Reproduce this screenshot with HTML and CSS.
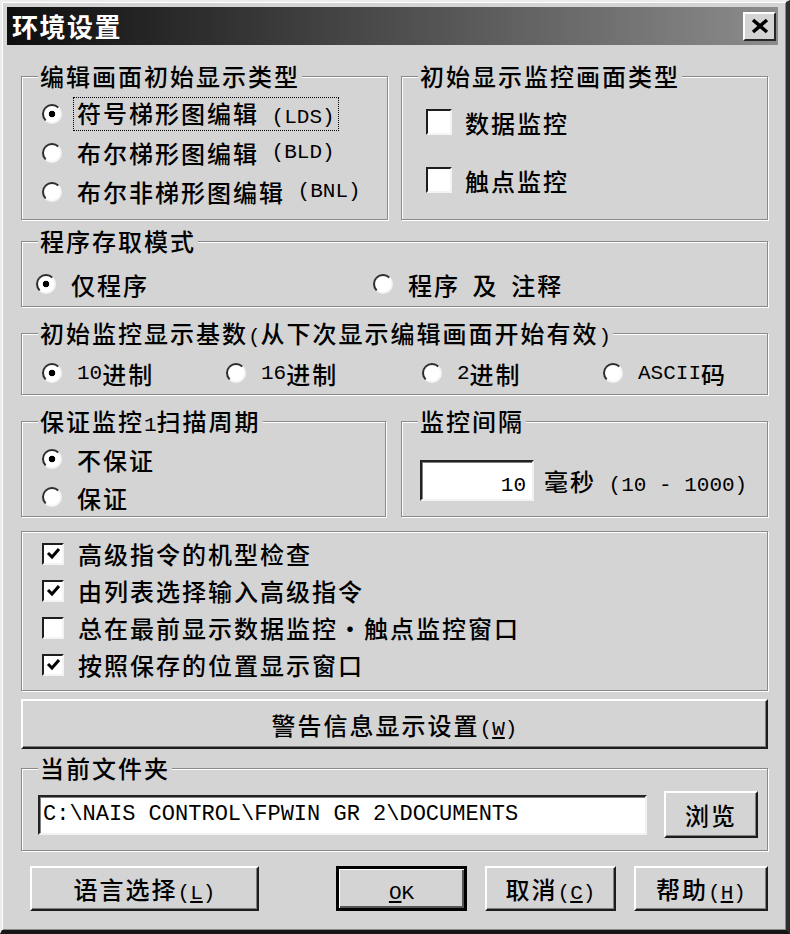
FILE: index.html
```html
<!DOCTYPE html>
<html lang="zh-CN">
	<head>
		<meta charset="UTF-8" />
		<meta name="viewport" content="width=device-width, initial-scale=1.0" />
		<title>环境设置</title>
		<link rel="stylesheet" href="styles.css">
	</head>
	<body>
		<div class="window">
			<div class="titlebar">
				<span class="title">环境设置</span>
				<button class="close-btn" aria-label="关闭">
					<svg width="18" height="16" viewBox="0 0 18 16"><path d="M2 2L16 14M16 2L2 14" stroke="#000" stroke-width="3.5" fill="none"/></svg>
				</button>
			</div>

			<div class="content">
				<div class="row-two">
					<fieldset class="group">
						<legend>编辑画面初始显示类型</legend>
						<div class="edit-type">
							<label class="opt"><span class="radio on"></span><span class="focus">符号梯形图编辑<span class="en"> (LDS)</span></span></label>
							<label class="opt"><span class="radio"></span>布尔梯形图编辑<span class="en"> (BLD)</span></label>
							<label class="opt"><span class="radio"></span>布尔非梯形图编辑<span class="en"> (BNL)</span></label>
						</div>
					</fieldset>
					<fieldset class="group">
						<legend>初始显示监控画面类型</legend>
						<div class="monitor-type">
							<label class="opt"><span class="check big"></span>数据监控</label>
							<label class="opt"><span class="check big"></span>触点监控</label>
						</div>
					</fieldset>
				</div>

				<fieldset class="group access">
					<legend>程序存取模式</legend>
					<div class="inline-opts">
						<label class="opt first"><span class="radio on"></span>仅程序</label>
						<label class="opt"><span class="radio"></span>程序<span class="en"> </span>及<span class="en"> </span>注释</label>
					</div>
				</fieldset>

				<fieldset class="group base">
					<legend>初始监控显示基数<span class="en">(</span>从下次显示编辑画面开始有效<span class="en">)</span></legend>
					<div class="base-opts">
						<label class="opt w184"><span class="radio on"></span><span class="en">10</span>进制</label>
						<label class="opt w196"><span class="radio"></span><span class="en">16</span>进制</label>
						<label class="opt w181"><span class="radio"></span><span class="en">2</span>进制</label>
						<label class="opt"><span class="radio"></span><span class="en">ASCII</span>码</label>
					</div>
				</fieldset>

				<div class="row-two row-scan">
					<fieldset class="group">
						<legend>保证监控<span class="en">1</span>扫描周期</legend>
						<div class="scan-opts">
							<label class="opt"><span class="radio on"></span>不保证</label>
							<label class="opt"><span class="radio"></span>保证</label>
						</div>
					</fieldset>
					<fieldset class="group">
						<legend>监控间隔</legend>
						<div class="interval">
							<div class="edit num"><span class="en">10</span></div>
							<span class="unit">毫秒<span class="en"> (10 - 1000)</span></span>
						</div>
					</fieldset>
				</div>

				<div class="group options">
					<label class="opt"><span class="check"><svg width="15" height="13" viewBox="0 0 15 13"><path d="M2 6L6 10L13 2" stroke="#000" stroke-width="3" fill="none"/></svg></span>高级指令的机型检查</label>
					<label class="opt"><span class="check"><svg width="15" height="13" viewBox="0 0 15 13"><path d="M2 6L6 10L13 2" stroke="#000" stroke-width="3" fill="none"/></svg></span>由列表选择输入高级指令</label>
					<label class="opt"><span class="check"></span>总在最前显示数据监控・触点监控窗口</label>
					<label class="opt"><span class="check"><svg width="15" height="13" viewBox="0 0 15 13"><path d="M2 6L6 10L13 2" stroke="#000" stroke-width="3" fill="none"/></svg></span>按照保存的位置显示窗口</label>
				</div>

				<button class="btn btn-wide">警告信息显示设置<span class="en">(<u>W</u>)</span></button>

				<fieldset class="group folder">
					<legend>当前文件夹</legend>
					<div class="folder-row">
						<div class="edit path">C:\NAIS CONTROL\FPWIN GR 2\DOCUMENTS</div>
						<button class="btn btn-browse">浏览</button>
					</div>
				</fieldset>

				<div class="actions">
					<button class="btn btn-lang">语言选择<span class="en">(<u>L</u>)</span></button>
					<button class="btn btn-ok"><span class="en"><u>O</u>K</span></button>
					<button class="btn btn-small">取消<span class="en">(<u>C</u>)</span></button>
					<button class="btn btn-help">帮助<span class="en">(<u>H</u>)</span></button>
				</div>
			</div>
		</div>
	</body>
</html>
```

FILE: styles.css
```css
* {
	box-sizing: border-box;
}
body {
	margin: 0;
	background: #d4d4d4;
	font-family: 'Noto Sans CJK SC', 'Noto Sans', sans-serif;
	font-size: 24px;
	font-weight: 500;
	letter-spacing: 2px;
	color: #000;
}
.en {
	font-family: 'Liberation Mono', monospace;
	font-size: 21px;
	font-weight: 400;
	letter-spacing: 0;
	line-height: 1;
	white-space: pre;
}
.window {
	width: 790px;
	height: 934px;
	border-style: solid;
	border-width: 2px 4px 4px 2px;
	border-color: #ececec #2e2e2e #161616 #ececec;
	padding: 5px 8px 0 5px;
	box-shadow: inset 1px 1px 0 #fff, inset -1px -1px 0 #8a8a8a;
}
.titlebar {
	height: 38px;
	display: flex;
	align-items: center;
	justify-content: space-between;
	padding: 0 2px 0 5px;
	background: linear-gradient(to right, #0e0e0e, #8c8c8c);
}
.title {
	color: #fff;
	font-weight: 700;
	font-size: 26px;
	letter-spacing: 1.5px;
	line-height: 38px;
}
.close-btn {
	width: 33px;
	height: 29px;
	padding: 0;
	background: #d4d4d4;
	border: 2px solid;
	border-color: #fff #262626 #262626 #fff;
	display: flex;
	align-items: center;
	justify-content: center;
}
.content {
	padding: 18px 10px 0 14px;
}

/* group boxes */
.group {
	margin: 0;
	padding: 0;
	min-width: 0;
	border: 1px solid #8a8a8a;
	box-shadow: 1px 1px 0 #fff, inset 1px 1px 0 #fff;
}
.group legend {
	height: 26px;
	margin-left: 16px;
	padding: 0 2px;
	line-height: 26px;
	background: #d4d4d4;
	white-space: nowrap;
}
.row-two {
	display: grid;
	grid-template-columns: 367px 367px;
	column-gap: 13px;
}
.row-scan {
	grid-template-columns: 365px 367px;
	column-gap: 15px;
	margin-top: 13px;
}
.opt {
	display: flex;
	align-items: center;
	height: 39px;
	white-space: nowrap;
}

/* controls */
.radio {
	flex: none;
	width: 20px;
	height: 20px;
	margin-right: 15px;
	border-radius: 50%;
	border: 2px solid;
	border-color: #2c2c2c #f4f4f4 #f4f4f4 #2c2c2c;
	background: #fff;
}
.radio.on {
	background: radial-gradient(circle, #000 3px, #fff 3.6px);
}
.check {
	flex: none;
	width: 22px;
	height: 22px;
	margin-right: 14px;
	border: 2px solid;
	border-color: #1e1e1e #f4f4f4 #f4f4f4 #1e1e1e;
	background: #fff;
	display: flex;
	align-items: center;
	justify-content: center;
}
.check.big {
	width: 26px;
	height: 26px;
	margin-right: 13px;
}
.focus {
	margin-left: -4px;
	padding: 2px 3px;
	border: 1px dotted #000;
	line-height: 26px;
}
.edit {
	background: #fff;
	border: 2px solid;
	border-color: #222 #f2f2f2 #f2f2f2 #222;
	box-shadow: inset 1px 1px 0 #808080;
}
.btn {
	background: #d4d4d4;
	border: 2px solid;
	border-color: #fff #1c1c1c #1c1c1c #fff;
	box-shadow: inset -1px -1px 0 #808080;
	font: inherit;
	letter-spacing: inherit;
	color: #000;
	padding: 0;
	cursor: pointer;
}

/* individual groups */
.edit-type {
	padding: 5px 0 8px 20px;
}
.monitor-type {
	padding: 13px 0 0 24px;
	display: flex;
	flex-direction: column;
	gap: 18px;
}
.monitor-type .opt {
	height: 40px;
}
.access {
	margin-top: 8px;
}
.inline-opts {
	display: flex;
	padding: 12px 0 4px 14px;
}
.inline-opts .opt {
	height: 36px;
}
.inline-opts .first {
	width: 337px;
}
.base {
	margin-top: 13px;
}
.base-opts {
	display: flex;
	padding: 9px 0 3px 20px;
}
.base-opts .opt {
	height: 36px;
}
.w184 { width: 184px; }
.w196 { width: 196px; }
.w181 { width: 181px; }
.scan-opts {
	padding: 6px 0 0 20px;
}
.scan-opts .opt {
	height: 38px;
}
.interval {
	display: flex;
	align-items: center;
	padding: 26px 0 0 18px;
}
.num {
	width: 114px;
	height: 41px;
	padding-right: 6px;
	text-align: right;
	line-height: 37px;
}
.unit {
	margin-left: 10px;
}
.options {
	margin-top: 14px;
	padding: 3px 0 7px 20px;
}
.options .opt {
	height: 37px;
}
.btn-wide {
	display: block;
	width: 100%;
	height: 50px;
	margin-top: 8px;
}
.folder {
	margin-top: 6px;
}
.folder-row {
	display: flex;
	align-items: center;
	padding: 10px 9px 12px 16px;
}
.path {
	width: 609px;
	height: 40px;
	padding-left: 3px;
	font-family: 'Liberation Mono', monospace;
	font-size: 22px;
	font-weight: 400;
	letter-spacing: 0;
	line-height: 36px;
	white-space: nowrap;
}
.btn-browse {
	margin-left: auto;
	width: 94px;
	height: 47px;
}
.actions {
	display: flex;
	gap: 18px;
	margin-top: 15px;
	padding-left: 9px;
}
.actions .btn {
	height: 45px;
	width: 131px;
}
.actions .btn-lang {
	width: 229px;
}
.actions .btn-ok {
	margin-left: auto;
	border: 3px solid #000;
	box-shadow: inset 1px 1px 0 #fff, inset -2px -2px 0 #555;
}
.actions .btn-help {
	width: 134px;
}
```
